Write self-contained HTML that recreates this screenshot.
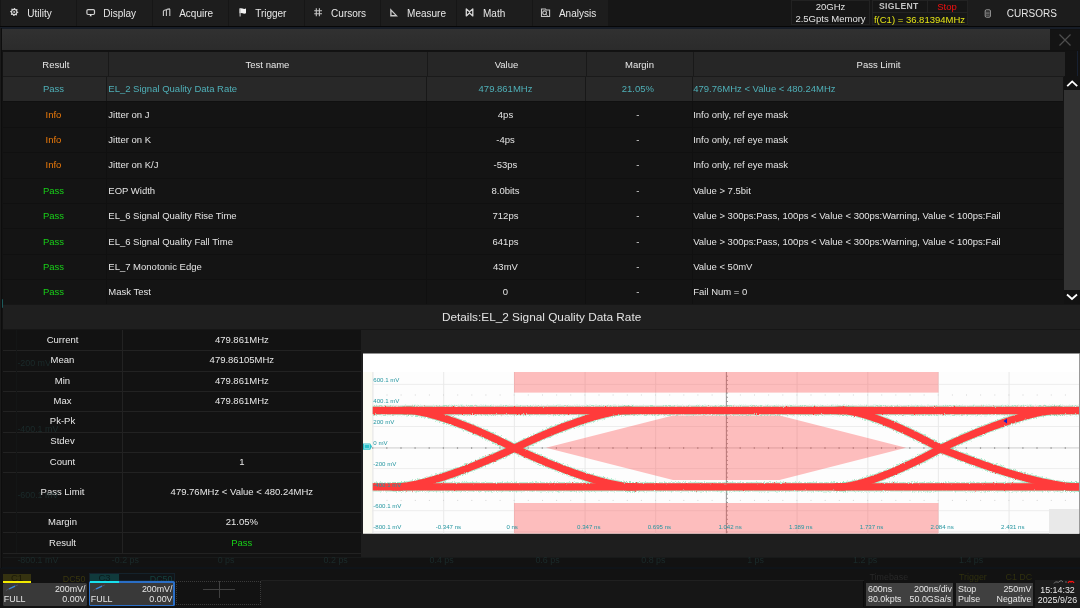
<!DOCTYPE html><html><head><meta charset="utf-8"><style>
html,body{margin:0;padding:0;width:1080px;height:608px;overflow:hidden;background:#121212;}
body{position:relative;font-family:"Liberation Sans",sans-serif;}
.b{position:absolute;}
.t{position:absolute;white-space:nowrap;}
#root{position:absolute;left:0;top:0;width:1080px;height:608px;will-change:transform;}
</style></head><body><div id="root">
<div class="b" style="left:0px;top:0px;width:1080px;height:608px;background:#121212;"></div>
<div class="b" style="left:0px;top:0px;width:1080px;height:26px;background:#161616;"></div>
<div class="b" style="left:1px;top:0px;width:75px;height:26px;background:#1d1d1d;"></div>
<div class="t" style="left:27.30px;top:8.73px;font-size:10px;line-height:10px;color:#e8e8e8;">Utility</div>
<div class="b" style="left:77px;top:0px;width:75px;height:26px;background:#1d1d1d;"></div>
<div class="t" style="left:103.25px;top:8.73px;font-size:10px;line-height:10px;color:#e8e8e8;">Display</div>
<div class="b" style="left:153px;top:0px;width:75px;height:26px;background:#1d1d1d;"></div>
<div class="t" style="left:179.20px;top:8.73px;font-size:10px;line-height:10px;color:#e8e8e8;">Acquire</div>
<div class="b" style="left:229px;top:0px;width:75px;height:26px;background:#1d1d1d;"></div>
<div class="t" style="left:255.15px;top:8.73px;font-size:10px;line-height:10px;color:#e8e8e8;">Trigger</div>
<div class="b" style="left:305px;top:0px;width:75px;height:26px;background:#1d1d1d;"></div>
<div class="t" style="left:331.10px;top:8.73px;font-size:10px;line-height:10px;color:#e8e8e8;">Cursors</div>
<div class="b" style="left:381px;top:0px;width:75px;height:26px;background:#1d1d1d;"></div>
<div class="t" style="left:407.05px;top:8.73px;font-size:10px;line-height:10px;color:#e8e8e8;">Measure</div>
<div class="b" style="left:457px;top:0px;width:75px;height:26px;background:#1d1d1d;"></div>
<div class="t" style="left:483.00px;top:8.73px;font-size:10px;line-height:10px;color:#e8e8e8;">Math</div>
<div class="b" style="left:533px;top:0px;width:75px;height:26px;background:#1d1d1d;"></div>
<div class="t" style="left:558.95px;top:8.73px;font-size:10px;line-height:10px;color:#e8e8e8;">Analysis</div>
<div class="b" style="left:0px;top:26px;width:1080px;height:1px;background:#070707;"></div>
<div class="b" style="left:0px;top:27px;width:1080px;height:1.5px;background:#171d27;"></div>
<svg class="b" style="left:0;top:0" width="1080" height="26" viewBox="0 0 1080 26"><path d="M14.20,7.90 L15.00,7.98 L15.42,9.04 L15.98,9.34 L17.10,9.10 L17.61,9.72 L17.16,10.78 L17.34,11.38 L18.30,12.00 L18.22,12.80 L17.16,13.22 L16.86,13.78 L17.10,14.90 L16.48,15.41 L15.42,14.96 L14.82,15.14 L14.20,16.10 L13.40,16.02 L12.98,14.96 L12.42,14.66 L11.30,14.90 L10.79,14.28 L11.24,13.22 L11.06,12.62 L10.10,12.00 L10.18,11.20 L11.24,10.78 L11.54,10.22 L11.30,9.10 L11.92,8.59 L12.98,9.04 L13.58,8.86Z" fill="#d6d6d6"/><circle cx="14.2" cy="12" r="2.1" fill="#1d1d1d"/><circle cx="14.2" cy="12" r="1.1" fill="#bdbdbd"/><rect x="86.9" y="9.6" width="7.6" height="4.9" rx="1.2" fill="none" stroke="#cfcfcf" stroke-width="1.2"/><path d="M89.6 16.2 L90.7 14 L91.8 16.2 Z" fill="#f0f0f0"/><path d="M163.4 16.1 V11.2 Q163.6 10 166 9.7 M166.4 16.1 V10.2 Q166.6 9 169.5 8.9 Q170 9.2 169.8 10.5 V16.1" fill="none" stroke="#c8c8c8" stroke-width="1.1"/><path d="M239.5 8.5 Q241 7.8 242.6 8.6 Q244.3 9.3 246 8.5 V13.2 Q244.3 14 242.6 13.3 Q241 12.6 239.5 13.2 Z" fill="#f4f4f4"/><path d="M240.1 8.5 V16.6" stroke="#bdbdbd" stroke-width="1.1"/><path d="M316.3 8.2 V16.2 M319.4 8.2 V16.2 M314.2 10.7 H322 M314.2 13.8 H322" fill="none" stroke="#c4c4c4" stroke-width="1.1"/><path d="M390.2 8.2 V16.4 H398 Z M391.6 11.6 V15 H395 Z" fill="#c8c8c8" fill-rule="evenodd"/><path d="M466.3 9 L469.5 11.8 L472.8 9 V15.9 L469.5 13 L466.3 15.9 Z" fill="none" stroke="#d8d8d8" stroke-width="1.3" stroke-linejoin="round"/><path d="M541.5 9 H545.5 L546.3 10 H549.6 V16.5 H541.5 Z" fill="none" stroke="#c4c4c4" stroke-width="1.1"/><circle cx="544.6" cy="12.8" r="1.9" fill="none" stroke="#c4c4c4" stroke-width="1.1"/><path d="M545.5 14 L547.6 15.6" stroke="#c4c4c4" stroke-width="1"/></svg>
<div class="b" style="left:791px;top:0px;width:79px;height:25px;background:#161616;box-shadow:inset 0 0 0 1px #222;"></div>
<div class="t" style="left:530.50px;width:600px;text-align:center;top:1.76px;font-size:9.5px;line-height:9.5px;color:#e4e4e4;">20GHz</div>
<div class="t" style="left:530.50px;width:600px;text-align:center;top:13.76px;font-size:9.5px;line-height:9.5px;color:#e4e4e4;">2.5Gpts Memory</div>
<div class="b" style="left:872px;top:0px;width:96px;height:25px;background:#161616;box-shadow:inset 0 0 0 1px #222;"></div>
<div class="b" style="left:872px;top:12px;width:96px;height:1px;background:#232323;"></div>
<div class="b" style="left:927px;top:0px;width:1px;height:12px;background:#232323;"></div>
<div class="t" style="left:598.80px;width:600px;text-align:center;top:1.92px;font-size:8.6px;line-height:8.6px;color:#c4c4c4;font-weight:bold;letter-spacing:0.35px;">SIGLENT</div>
<div class="t" style="left:647.00px;width:600px;text-align:center;top:1.96px;font-size:9.5px;line-height:9.5px;color:#f01010;">Stop</div>
<div class="t" style="left:619.50px;width:600px;text-align:center;top:14.76px;font-size:9.5px;line-height:9.5px;color:#e4e416;">f(C1) = 36.81394MHz</div>
<div class="b" style="left:968px;top:0px;width:112px;height:26px;background:#1c1c1c;"></div>
<svg class="b" style="left:984px;top:9px;" width="8" height="9" viewBox="0 0 8 9"><rect x="1.2" y="0.8" width="5.2" height="7.4" rx="1.2" fill="none" stroke="#bbb" stroke-width="0.8"/><path d="M2 3.2 H5.6 M2 4.7 H5.6 M2 6.2 H5.6" stroke="#aaa" stroke-width="0.6"/></svg>
<div class="t" style="left:1006.80px;top:8.73px;font-size:10px;line-height:10px;color:#e6e6e6;">CURSORS</div>
<div class="b" style="left:2px;top:28.5px;width:1078px;height:23.0px;background:#111111;"></div>
<div class="b" style="left:2px;top:28.6px;width:1048px;height:21.4px;background:#2e2e2e;background:linear-gradient(#313131,#2b2b2b);"></div>
<div class="b" style="left:1050px;top:30px;width:30px;height:19.5px;background:#141414;"></div>
<svg class="b" style="left:1058px;top:33px;" width="14" height="14" viewBox="0 0 14 14"><path d="M1.5 1.5 L12.5 12.5 M12.5 1.5 L1.5 12.5" stroke="#4e4e4e" stroke-width="1.2"/></svg>
<div class="b" style="left:0px;top:51px;width:1080px;height:254px;background:#121212;"></div>
<div class="b" style="left:3px;top:52px;width:1062px;height:252px;background:#141414;"></div>
<div class="b" style="left:3px;top:52px;width:1062px;height:24px;background:#262626;"></div>
<div class="b" style="left:3px;top:76px;width:1062px;height:1px;background:#1a1a1a;"></div>
<div class="b" style="left:108px;top:52px;width:1px;height:24px;background:#191919;"></div>
<div class="b" style="left:427px;top:52px;width:1px;height:24px;background:#191919;"></div>
<div class="b" style="left:586px;top:52px;width:1px;height:24px;background:#191919;"></div>
<div class="b" style="left:693px;top:52px;width:1px;height:24px;background:#191919;"></div>
<div class="t" style="left:-244.20px;width:600px;text-align:center;top:59.96px;font-size:9.5px;line-height:9.5px;color:#e8e8e8;">Result</div>
<div class="t" style="left:-32.50px;width:600px;text-align:center;top:59.96px;font-size:9.5px;line-height:9.5px;color:#e8e8e8;">Test name</div>
<div class="t" style="left:206.50px;width:600px;text-align:center;top:59.96px;font-size:9.5px;line-height:9.5px;color:#e8e8e8;">Value</div>
<div class="t" style="left:339.50px;width:600px;text-align:center;top:59.96px;font-size:9.5px;line-height:9.5px;color:#e8e8e8;">Margin</div>
<div class="t" style="left:578.50px;width:600px;text-align:center;top:59.96px;font-size:9.5px;line-height:9.5px;color:#e8e8e8;">Pass Limit</div>
<div class="b" style="left:3px;top:77px;width:1060px;height:24px;background:#282828;"></div>
<div class="b" style="left:106px;top:77px;width:1px;height:24px;background:#181818;"></div>
<div class="b" style="left:426px;top:77px;width:1px;height:24px;background:#181818;"></div>
<div class="b" style="left:585px;top:77px;width:1px;height:24px;background:#181818;"></div>
<div class="b" style="left:692px;top:77px;width:1px;height:24px;background:#181818;"></div>
<div class="t" style="left:-246.50px;width:600px;text-align:center;top:84.26px;font-size:9.5px;line-height:9.5px;color:#4fb0b8;">Pass</div>
<div class="t" style="left:108.30px;top:84.26px;font-size:9.5px;line-height:9.5px;color:#4fb0b8;">EL_2 Signal Quality Data Rate</div>
<div class="t" style="left:205.50px;width:600px;text-align:center;top:84.26px;font-size:9.5px;line-height:9.5px;color:#4fb0b8;">479.861MHz</div>
<div class="t" style="left:337.80px;width:600px;text-align:center;top:84.26px;font-size:9.5px;line-height:9.5px;color:#4fb0b8;">21.05%</div>
<div class="t" style="left:693.20px;top:84.26px;font-size:9.5px;line-height:9.5px;color:#4fb0b8;">479.76MHz &lt; Value &lt; 480.24MHz</div>
<div class="b" style="left:3px;top:101px;width:1060px;height:1px;background:#101010;"></div>
<div class="b" style="left:106px;top:101px;width:1px;height:26px;background:#101010;"></div>
<div class="b" style="left:426px;top:101px;width:1px;height:26px;background:#101010;"></div>
<div class="b" style="left:585px;top:101px;width:1px;height:26px;background:#101010;"></div>
<div class="b" style="left:692px;top:101px;width:1px;height:26px;background:#101010;"></div>
<div class="t" style="left:-246.50px;width:600px;text-align:center;top:109.66px;font-size:9.5px;line-height:9.5px;color:#ec7a0a;">Info</div>
<div class="t" style="left:108.30px;top:109.66px;font-size:9.5px;line-height:9.5px;color:#e4e4e4;">Jitter on J</div>
<div class="t" style="left:205.50px;width:600px;text-align:center;top:109.66px;font-size:9.5px;line-height:9.5px;color:#e4e4e4;">4ps</div>
<div class="t" style="left:337.80px;width:600px;text-align:center;top:109.66px;font-size:9.5px;line-height:9.5px;color:#e4e4e4;">-</div>
<div class="t" style="left:693.20px;top:109.66px;font-size:9.5px;line-height:9.5px;color:#e4e4e4;">Info only, ref eye mask</div>
<div class="b" style="left:3px;top:127px;width:1060px;height:1px;background:#101010;"></div>
<div class="b" style="left:106px;top:127px;width:1px;height:25px;background:#101010;"></div>
<div class="b" style="left:426px;top:127px;width:1px;height:25px;background:#101010;"></div>
<div class="b" style="left:585px;top:127px;width:1px;height:25px;background:#101010;"></div>
<div class="b" style="left:692px;top:127px;width:1px;height:25px;background:#101010;"></div>
<div class="t" style="left:-246.50px;width:600px;text-align:center;top:135.06px;font-size:9.5px;line-height:9.5px;color:#ec7a0a;">Info</div>
<div class="t" style="left:108.30px;top:135.06px;font-size:9.5px;line-height:9.5px;color:#e4e4e4;">Jitter on K</div>
<div class="t" style="left:205.50px;width:600px;text-align:center;top:135.06px;font-size:9.5px;line-height:9.5px;color:#e4e4e4;">-4ps</div>
<div class="t" style="left:337.80px;width:600px;text-align:center;top:135.06px;font-size:9.5px;line-height:9.5px;color:#e4e4e4;">-</div>
<div class="t" style="left:693.20px;top:135.06px;font-size:9.5px;line-height:9.5px;color:#e4e4e4;">Info only, ref eye mask</div>
<div class="b" style="left:3px;top:152px;width:1060px;height:1px;background:#101010;"></div>
<div class="b" style="left:106px;top:152px;width:1px;height:26px;background:#101010;"></div>
<div class="b" style="left:426px;top:152px;width:1px;height:26px;background:#101010;"></div>
<div class="b" style="left:585px;top:152px;width:1px;height:26px;background:#101010;"></div>
<div class="b" style="left:692px;top:152px;width:1px;height:26px;background:#101010;"></div>
<div class="t" style="left:-246.50px;width:600px;text-align:center;top:160.46px;font-size:9.5px;line-height:9.5px;color:#ec7a0a;">Info</div>
<div class="t" style="left:108.30px;top:160.46px;font-size:9.5px;line-height:9.5px;color:#e4e4e4;">Jitter on K/J</div>
<div class="t" style="left:205.50px;width:600px;text-align:center;top:160.46px;font-size:9.5px;line-height:9.5px;color:#e4e4e4;">-53ps</div>
<div class="t" style="left:337.80px;width:600px;text-align:center;top:160.46px;font-size:9.5px;line-height:9.5px;color:#e4e4e4;">-</div>
<div class="t" style="left:693.20px;top:160.46px;font-size:9.5px;line-height:9.5px;color:#e4e4e4;">Info only, ref eye mask</div>
<div class="b" style="left:3px;top:178px;width:1060px;height:1px;background:#101010;"></div>
<div class="b" style="left:106px;top:178px;width:1px;height:25px;background:#101010;"></div>
<div class="b" style="left:426px;top:178px;width:1px;height:25px;background:#101010;"></div>
<div class="b" style="left:585px;top:178px;width:1px;height:25px;background:#101010;"></div>
<div class="b" style="left:692px;top:178px;width:1px;height:25px;background:#101010;"></div>
<div class="t" style="left:-246.50px;width:600px;text-align:center;top:185.86px;font-size:9.5px;line-height:9.5px;color:#18d018;">Pass</div>
<div class="t" style="left:108.30px;top:185.86px;font-size:9.5px;line-height:9.5px;color:#e4e4e4;">EOP Width</div>
<div class="t" style="left:205.50px;width:600px;text-align:center;top:185.86px;font-size:9.5px;line-height:9.5px;color:#e4e4e4;">8.0bits</div>
<div class="t" style="left:337.80px;width:600px;text-align:center;top:185.86px;font-size:9.5px;line-height:9.5px;color:#e4e4e4;">-</div>
<div class="t" style="left:693.20px;top:185.86px;font-size:9.5px;line-height:9.5px;color:#e4e4e4;">Value &gt; 7.5bit</div>
<div class="b" style="left:3px;top:203px;width:1060px;height:1px;background:#101010;"></div>
<div class="b" style="left:106px;top:203px;width:1px;height:25px;background:#101010;"></div>
<div class="b" style="left:426px;top:203px;width:1px;height:25px;background:#101010;"></div>
<div class="b" style="left:585px;top:203px;width:1px;height:25px;background:#101010;"></div>
<div class="b" style="left:692px;top:203px;width:1px;height:25px;background:#101010;"></div>
<div class="t" style="left:-246.50px;width:600px;text-align:center;top:211.26px;font-size:9.5px;line-height:9.5px;color:#18d018;">Pass</div>
<div class="t" style="left:108.30px;top:211.26px;font-size:9.5px;line-height:9.5px;color:#e4e4e4;">EL_6 Signal Quality Rise Time</div>
<div class="t" style="left:205.50px;width:600px;text-align:center;top:211.26px;font-size:9.5px;line-height:9.5px;color:#e4e4e4;">712ps</div>
<div class="t" style="left:337.80px;width:600px;text-align:center;top:211.26px;font-size:9.5px;line-height:9.5px;color:#e4e4e4;">-</div>
<div class="t" style="left:693.20px;top:211.26px;font-size:9.5px;line-height:9.5px;color:#e4e4e4;">Value &gt; 300ps:Pass, 100ps &lt; Value &lt; 300ps:Warning, Value &lt; 100ps:Fail</div>
<div class="b" style="left:3px;top:228px;width:1060px;height:1px;background:#101010;"></div>
<div class="b" style="left:106px;top:228px;width:1px;height:26px;background:#101010;"></div>
<div class="b" style="left:426px;top:228px;width:1px;height:26px;background:#101010;"></div>
<div class="b" style="left:585px;top:228px;width:1px;height:26px;background:#101010;"></div>
<div class="b" style="left:692px;top:228px;width:1px;height:26px;background:#101010;"></div>
<div class="t" style="left:-246.50px;width:600px;text-align:center;top:236.66px;font-size:9.5px;line-height:9.5px;color:#18d018;">Pass</div>
<div class="t" style="left:108.30px;top:236.66px;font-size:9.5px;line-height:9.5px;color:#e4e4e4;">EL_6 Signal Quality Fall Time</div>
<div class="t" style="left:205.50px;width:600px;text-align:center;top:236.66px;font-size:9.5px;line-height:9.5px;color:#e4e4e4;">641ps</div>
<div class="t" style="left:337.80px;width:600px;text-align:center;top:236.66px;font-size:9.5px;line-height:9.5px;color:#e4e4e4;">-</div>
<div class="t" style="left:693.20px;top:236.66px;font-size:9.5px;line-height:9.5px;color:#e4e4e4;">Value &gt; 300ps:Pass, 100ps &lt; Value &lt; 300ps:Warning, Value &lt; 100ps:Fail</div>
<div class="b" style="left:3px;top:254px;width:1060px;height:1px;background:#101010;"></div>
<div class="b" style="left:106px;top:254px;width:1px;height:25px;background:#101010;"></div>
<div class="b" style="left:426px;top:254px;width:1px;height:25px;background:#101010;"></div>
<div class="b" style="left:585px;top:254px;width:1px;height:25px;background:#101010;"></div>
<div class="b" style="left:692px;top:254px;width:1px;height:25px;background:#101010;"></div>
<div class="t" style="left:-246.50px;width:600px;text-align:center;top:262.06px;font-size:9.5px;line-height:9.5px;color:#18d018;">Pass</div>
<div class="t" style="left:108.30px;top:262.06px;font-size:9.5px;line-height:9.5px;color:#e4e4e4;">EL_7 Monotonic Edge</div>
<div class="t" style="left:205.50px;width:600px;text-align:center;top:262.06px;font-size:9.5px;line-height:9.5px;color:#e4e4e4;">43mV</div>
<div class="t" style="left:337.80px;width:600px;text-align:center;top:262.06px;font-size:9.5px;line-height:9.5px;color:#e4e4e4;">-</div>
<div class="t" style="left:693.20px;top:262.06px;font-size:9.5px;line-height:9.5px;color:#e4e4e4;">Value &lt; 50mV</div>
<div class="b" style="left:3px;top:279px;width:1060px;height:1px;background:#101010;"></div>
<div class="b" style="left:106px;top:279px;width:1px;height:26px;background:#101010;"></div>
<div class="b" style="left:426px;top:279px;width:1px;height:26px;background:#101010;"></div>
<div class="b" style="left:585px;top:279px;width:1px;height:26px;background:#101010;"></div>
<div class="b" style="left:692px;top:279px;width:1px;height:26px;background:#101010;"></div>
<div class="t" style="left:-246.50px;width:600px;text-align:center;top:287.46px;font-size:9.5px;line-height:9.5px;color:#18d018;">Pass</div>
<div class="t" style="left:108.30px;top:287.46px;font-size:9.5px;line-height:9.5px;color:#e4e4e4;">Mask Test</div>
<div class="t" style="left:205.50px;width:600px;text-align:center;top:287.46px;font-size:9.5px;line-height:9.5px;color:#e4e4e4;">0</div>
<div class="t" style="left:337.80px;width:600px;text-align:center;top:287.46px;font-size:9.5px;line-height:9.5px;color:#e4e4e4;">-</div>
<div class="t" style="left:693.20px;top:287.46px;font-size:9.5px;line-height:9.5px;color:#e4e4e4;">Fail Num = 0</div>
<div class="b" style="left:1064px;top:76px;width:16px;height:228px;background:#121212;"></div>
<div class="b" style="left:1064px;top:90px;width:16px;height:200px;background:#333333;"></div>
<svg class="b" style="left:1064px;top:76px;" width="16" height="14" viewBox="0 0 16 14"><path d="M3.2 10.2 L8.2 5.4 L13.2 10.2" fill="none" stroke="#fff" stroke-width="1.8"/></svg>
<svg class="b" style="left:1064px;top:290px;" width="16" height="14" viewBox="0 0 16 14"><path d="M3 4.5 L8 9 L13 4.5" fill="none" stroke="#fff" stroke-width="1.8"/></svg>
<div class="b" style="left:0px;top:304px;width:1080px;height:1px;background:#161616;"></div>
<div class="b" style="left:3px;top:305px;width:1077px;height:24px;background:#1f1f1f;"></div>
<div class="b" style="left:3px;top:329px;width:1077px;height:1px;background:#161616;"></div>
<div class="t" style="left:241.60px;width:600px;text-align:center;top:311.91px;font-size:11.8px;line-height:11.8px;color:#e4e4e4;">Details:EL_2 Signal Quality Data Rate</div>
<div class="b" style="left:361px;top:330px;width:719px;height:227px;background:#1e1e1e;"></div>
<div class="b" style="left:3px;top:330px;width:358px;height:223px;background:#121212;"></div>
<div class="t" style="left:-237.50px;width:600px;text-align:center;top:334.91px;font-size:9.5px;line-height:9.5px;color:#e8e8e8;">Current</div>
<div class="t" style="left:-58.20px;width:600px;text-align:center;top:334.91px;font-size:9.5px;line-height:9.5px;color:#e8e8e8;">479.861MHz</div>
<div class="b" style="left:3px;top:350px;width:358px;height:1px;background:#222222;"></div>
<div class="t" style="left:-237.50px;width:600px;text-align:center;top:355.41px;font-size:9.5px;line-height:9.5px;color:#e8e8e8;">Mean</div>
<div class="t" style="left:-58.20px;width:600px;text-align:center;top:355.41px;font-size:9.5px;line-height:9.5px;color:#e8e8e8;">479.86105MHz</div>
<div class="b" style="left:3px;top:371px;width:358px;height:1px;background:#222222;"></div>
<div class="t" style="left:-237.50px;width:600px;text-align:center;top:375.66px;font-size:9.5px;line-height:9.5px;color:#e8e8e8;">Min</div>
<div class="t" style="left:-58.20px;width:600px;text-align:center;top:375.66px;font-size:9.5px;line-height:9.5px;color:#e8e8e8;">479.861MHz</div>
<div class="b" style="left:3px;top:391px;width:358px;height:1px;background:#222222;"></div>
<div class="t" style="left:-237.50px;width:600px;text-align:center;top:395.76px;font-size:9.5px;line-height:9.5px;color:#e8e8e8;">Max</div>
<div class="t" style="left:-58.20px;width:600px;text-align:center;top:395.76px;font-size:9.5px;line-height:9.5px;color:#e8e8e8;">479.861MHz</div>
<div class="b" style="left:3px;top:411px;width:358px;height:1px;background:#222222;"></div>
<div class="t" style="left:-237.50px;width:600px;text-align:center;top:416.06px;font-size:9.5px;line-height:9.5px;color:#e8e8e8;">Pk-Pk</div>
<div class="t" style="left:-58.20px;width:600px;text-align:center;top:416.06px;font-size:9.5px;line-height:9.5px;color:#e8e8e8;"></div>
<div class="b" style="left:3px;top:432px;width:358px;height:1px;background:#222222;"></div>
<div class="t" style="left:-237.50px;width:600px;text-align:center;top:436.26px;font-size:9.5px;line-height:9.5px;color:#e8e8e8;">Stdev</div>
<div class="t" style="left:-58.20px;width:600px;text-align:center;top:436.26px;font-size:9.5px;line-height:9.5px;color:#e8e8e8;"></div>
<div class="b" style="left:3px;top:452px;width:358px;height:1px;background:#222222;"></div>
<div class="t" style="left:-237.50px;width:600px;text-align:center;top:456.56px;font-size:9.5px;line-height:9.5px;color:#e8e8e8;">Count</div>
<div class="t" style="left:-58.20px;width:600px;text-align:center;top:456.56px;font-size:9.5px;line-height:9.5px;color:#e8e8e8;">1</div>
<div class="b" style="left:3px;top:472px;width:358px;height:1px;background:#222222;"></div>
<div class="t" style="left:-237.50px;width:600px;text-align:center;top:486.96px;font-size:9.5px;line-height:9.5px;color:#e8e8e8;">Pass Limit</div>
<div class="t" style="left:-58.20px;width:600px;text-align:center;top:486.96px;font-size:9.5px;line-height:9.5px;color:#e8e8e8;">479.76MHz &lt; Value &lt; 480.24MHz</div>
<div class="b" style="left:3px;top:512px;width:358px;height:1px;background:#222222;"></div>
<div class="t" style="left:-237.50px;width:600px;text-align:center;top:516.96px;font-size:9.5px;line-height:9.5px;color:#e8e8e8;">Margin</div>
<div class="t" style="left:-58.20px;width:600px;text-align:center;top:516.96px;font-size:9.5px;line-height:9.5px;color:#e8e8e8;">21.05%</div>
<div class="b" style="left:3px;top:532px;width:358px;height:1px;background:#222222;"></div>
<div class="t" style="left:-237.50px;width:600px;text-align:center;top:538.06px;font-size:9.5px;line-height:9.5px;color:#e8e8e8;">Result</div>
<div class="t" style="left:-58.20px;width:600px;text-align:center;top:538.06px;font-size:9.5px;line-height:9.5px;color:#e8e8e8;"><span style="color:#18d018">Pass</span></div>
<div class="b" style="left:122px;top:330px;width:1px;height:223px;background:#222222;"></div>
<div class="b" style="left:3px;top:553px;width:358px;height:1px;background:#222222;"></div>
<div class="t" style="left:17.40px;top:359.07px;font-size:8.9px;line-height:8.9px;color:#1b2b2b;">-200 mV</div>
<div class="t" style="left:17.40px;top:424.77px;font-size:8.9px;line-height:8.9px;color:#1b2b2b;">-400.1 mV</div>
<div class="t" style="left:17.40px;top:490.57px;font-size:8.9px;line-height:8.9px;color:#1b2b2b;">-600.1 mV</div>
<div class="b" style="left:16px;top:330px;width:1px;height:223px;background:#141616;"></div>
<svg class="b" style="left:0;top:0" width="1080" height="608" viewBox="0 0 1080 608"><defs><clipPath id="pc"><rect x="372.7" y="372" width="706.3" height="161.5"/></clipPath><filter id="nz" x="0" y="0" width="1080" height="608" filterUnits="userSpaceOnUse"><feTurbulence type="fractalNoise" baseFrequency="0.9" numOctaves="2" seed="7" result="t"/><feDisplacementMap in="SourceGraphic" in2="t" scale="4" xChannelSelector="R" yChannelSelector="G"/></filter><filter id="nz2" x="0" y="0" width="1080" height="608" filterUnits="userSpaceOnUse"><feTurbulence type="fractalNoise" baseFrequency="0.9" numOctaves="1" seed="11" result="t"/><feDisplacementMap in="SourceGraphic" in2="t" scale="2.2" xChannelSelector="R" yChannelSelector="G"/></filter></defs><rect x="363" y="353.5" width="716.5" height="180" fill="#ffffff"/><rect x="363" y="372" width="9.7" height="161.5" fill="#fcfbf3"/><rect x="372.7" y="372" width="706.3" height="161.5" fill="#fdfdfd"/><line x1="443.7" y1="372" x2="443.7" y2="533.5" stroke="#e4e4e4" stroke-width="0.8"/><line x1="514.4" y1="372" x2="514.4" y2="533.5" stroke="#e4e4e4" stroke-width="0.8"/><line x1="585.1" y1="372" x2="585.1" y2="533.5" stroke="#e4e4e4" stroke-width="0.8"/><line x1="655.7" y1="372" x2="655.7" y2="533.5" stroke="#e4e4e4" stroke-width="0.8"/><line x1="726.4" y1="372" x2="726.4" y2="533.5" stroke="#e4e4e4" stroke-width="0.8"/><line x1="797.1" y1="372" x2="797.1" y2="533.5" stroke="#e4e4e4" stroke-width="0.8"/><line x1="867.8" y1="372" x2="867.8" y2="533.5" stroke="#e4e4e4" stroke-width="0.8"/><line x1="938.4" y1="372" x2="938.4" y2="533.5" stroke="#e4e4e4" stroke-width="0.8"/><line x1="1009.1" y1="372" x2="1009.1" y2="533.5" stroke="#e4e4e4" stroke-width="0.8"/><line x1="372.9" y1="372" x2="372.9" y2="533.5" stroke="#dcdcdc" stroke-width="0.8"/><line x1="372.7" y1="384.4" x2="1079" y2="384.4" stroke="#e8e8e8" stroke-width="0.8"/><line x1="372.7" y1="405.4" x2="1079" y2="405.4" stroke="#e8e8e8" stroke-width="0.8"/><line x1="372.7" y1="426.5" x2="1079" y2="426.5" stroke="#e8e8e8" stroke-width="0.8"/><line x1="372.7" y1="447.5" x2="1079" y2="447.5" stroke="#e8e8e8" stroke-width="0.8"/><line x1="372.7" y1="468.6" x2="1079" y2="468.6" stroke="#e8e8e8" stroke-width="0.8"/><line x1="372.7" y1="489.6" x2="1079" y2="489.6" stroke="#e8e8e8" stroke-width="0.8"/><line x1="372.7" y1="510.7" x2="1079" y2="510.7" stroke="#e8e8e8" stroke-width="0.8"/><line x1="372.7" y1="531.8" x2="1079" y2="531.8" stroke="#e8e8e8" stroke-width="0.8"/><line x1="372.7" y1="448" x2="1079" y2="448" stroke="#d4d4d4" stroke-width="1"/><line x1="726.4" y1="372" x2="726.4" y2="533.5" stroke="#8c8c8c" stroke-width="0.9"/><rect x="372.1" y="447" width="1.2" height="2" fill="#a8a8a8"/><rect x="386.2" y="447" width="1.2" height="2" fill="#a8a8a8"/><rect x="400.4" y="447" width="1.2" height="2" fill="#a8a8a8"/><rect x="414.5" y="447" width="1.2" height="2" fill="#a8a8a8"/><rect x="428.6" y="447" width="1.2" height="2" fill="#a8a8a8"/><rect x="442.8" y="447" width="1.2" height="2" fill="#a8a8a8"/><rect x="456.9" y="447" width="1.2" height="2" fill="#a8a8a8"/><rect x="471.0" y="447" width="1.2" height="2" fill="#a8a8a8"/><rect x="485.2" y="447" width="1.2" height="2" fill="#a8a8a8"/><rect x="499.3" y="447" width="1.2" height="2" fill="#a8a8a8"/><rect x="513.4" y="447" width="1.2" height="2" fill="#a8a8a8"/><rect x="527.6" y="447" width="1.2" height="2" fill="#a8a8a8"/><rect x="541.7" y="447" width="1.2" height="2" fill="#a8a8a8"/><rect x="555.8" y="447" width="1.2" height="2" fill="#a8a8a8"/><rect x="570.0" y="447" width="1.2" height="2" fill="#a8a8a8"/><rect x="584.1" y="447" width="1.2" height="2" fill="#a8a8a8"/><rect x="598.2" y="447" width="1.2" height="2" fill="#a8a8a8"/><rect x="612.4" y="447" width="1.2" height="2" fill="#a8a8a8"/><rect x="626.5" y="447" width="1.2" height="2" fill="#a8a8a8"/><rect x="640.6" y="447" width="1.2" height="2" fill="#a8a8a8"/><rect x="654.8" y="447" width="1.2" height="2" fill="#a8a8a8"/><rect x="668.9" y="447" width="1.2" height="2" fill="#a8a8a8"/><rect x="683.0" y="447" width="1.2" height="2" fill="#a8a8a8"/><rect x="697.2" y="447" width="1.2" height="2" fill="#a8a8a8"/><rect x="711.3" y="447" width="1.2" height="2" fill="#a8a8a8"/><rect x="725.5" y="447" width="1.2" height="2" fill="#a8a8a8"/><rect x="739.6" y="447" width="1.2" height="2" fill="#a8a8a8"/><rect x="753.7" y="447" width="1.2" height="2" fill="#a8a8a8"/><rect x="767.9" y="447" width="1.2" height="2" fill="#a8a8a8"/><rect x="782.0" y="447" width="1.2" height="2" fill="#a8a8a8"/><rect x="796.1" y="447" width="1.2" height="2" fill="#a8a8a8"/><rect x="810.3" y="447" width="1.2" height="2" fill="#a8a8a8"/><rect x="824.4" y="447" width="1.2" height="2" fill="#a8a8a8"/><rect x="838.5" y="447" width="1.2" height="2" fill="#a8a8a8"/><rect x="852.7" y="447" width="1.2" height="2" fill="#a8a8a8"/><rect x="866.8" y="447" width="1.2" height="2" fill="#a8a8a8"/><rect x="880.9" y="447" width="1.2" height="2" fill="#a8a8a8"/><rect x="895.1" y="447" width="1.2" height="2" fill="#a8a8a8"/><rect x="909.2" y="447" width="1.2" height="2" fill="#a8a8a8"/><rect x="923.3" y="447" width="1.2" height="2" fill="#a8a8a8"/><rect x="937.5" y="447" width="1.2" height="2" fill="#a8a8a8"/><rect x="951.6" y="447" width="1.2" height="2" fill="#a8a8a8"/><rect x="965.7" y="447" width="1.2" height="2" fill="#a8a8a8"/><rect x="979.9" y="447" width="1.2" height="2" fill="#a8a8a8"/><rect x="994.0" y="447" width="1.2" height="2" fill="#a8a8a8"/><rect x="1008.1" y="447" width="1.2" height="2" fill="#a8a8a8"/><rect x="1022.3" y="447" width="1.2" height="2" fill="#a8a8a8"/><rect x="1036.4" y="447" width="1.2" height="2" fill="#a8a8a8"/><rect x="1050.5" y="447" width="1.2" height="2" fill="#a8a8a8"/><rect x="1064.7" y="447" width="1.2" height="2" fill="#a8a8a8"/><rect x="386.5" y="394.5" width="1" height="1" fill="#d4d4d4"/><rect x="400.6" y="394.5" width="1" height="1" fill="#d4d4d4"/><rect x="414.8" y="394.5" width="1" height="1" fill="#d4d4d4"/><rect x="428.9" y="394.5" width="1" height="1" fill="#d4d4d4"/><rect x="443.0" y="394.5" width="1" height="1" fill="#d4d4d4"/><rect x="457.2" y="394.5" width="1" height="1" fill="#d4d4d4"/><rect x="471.3" y="394.5" width="1" height="1" fill="#d4d4d4"/><rect x="485.4" y="394.5" width="1" height="1" fill="#d4d4d4"/><rect x="499.6" y="394.5" width="1" height="1" fill="#d4d4d4"/><rect x="513.7" y="394.5" width="1" height="1" fill="#d4d4d4"/><rect x="527.8" y="394.5" width="1" height="1" fill="#d4d4d4"/><rect x="542.0" y="394.5" width="1" height="1" fill="#d4d4d4"/><rect x="556.1" y="394.5" width="1" height="1" fill="#d4d4d4"/><rect x="570.2" y="394.5" width="1" height="1" fill="#d4d4d4"/><rect x="584.4" y="394.5" width="1" height="1" fill="#d4d4d4"/><rect x="598.5" y="394.5" width="1" height="1" fill="#d4d4d4"/><rect x="612.6" y="394.5" width="1" height="1" fill="#d4d4d4"/><rect x="626.8" y="394.5" width="1" height="1" fill="#d4d4d4"/><rect x="640.9" y="394.5" width="1" height="1" fill="#d4d4d4"/><rect x="655.0" y="394.5" width="1" height="1" fill="#d4d4d4"/><rect x="669.2" y="394.5" width="1" height="1" fill="#d4d4d4"/><rect x="683.3" y="394.5" width="1" height="1" fill="#d4d4d4"/><rect x="697.4" y="394.5" width="1" height="1" fill="#d4d4d4"/><rect x="711.6" y="394.5" width="1" height="1" fill="#d4d4d4"/><rect x="725.7" y="394.5" width="1" height="1" fill="#d4d4d4"/><rect x="739.9" y="394.5" width="1" height="1" fill="#d4d4d4"/><rect x="754.0" y="394.5" width="1" height="1" fill="#d4d4d4"/><rect x="768.1" y="394.5" width="1" height="1" fill="#d4d4d4"/><rect x="782.3" y="394.5" width="1" height="1" fill="#d4d4d4"/><rect x="796.4" y="394.5" width="1" height="1" fill="#d4d4d4"/><rect x="810.5" y="394.5" width="1" height="1" fill="#d4d4d4"/><rect x="824.7" y="394.5" width="1" height="1" fill="#d4d4d4"/><rect x="838.8" y="394.5" width="1" height="1" fill="#d4d4d4"/><rect x="852.9" y="394.5" width="1" height="1" fill="#d4d4d4"/><rect x="867.1" y="394.5" width="1" height="1" fill="#d4d4d4"/><rect x="881.2" y="394.5" width="1" height="1" fill="#d4d4d4"/><rect x="895.3" y="394.5" width="1" height="1" fill="#d4d4d4"/><rect x="909.5" y="394.5" width="1" height="1" fill="#d4d4d4"/><rect x="923.6" y="394.5" width="1" height="1" fill="#d4d4d4"/><rect x="937.7" y="394.5" width="1" height="1" fill="#d4d4d4"/><rect x="951.9" y="394.5" width="1" height="1" fill="#d4d4d4"/><rect x="966.0" y="394.5" width="1" height="1" fill="#d4d4d4"/><rect x="980.1" y="394.5" width="1" height="1" fill="#d4d4d4"/><rect x="994.3" y="394.5" width="1" height="1" fill="#d4d4d4"/><rect x="1008.4" y="394.5" width="1" height="1" fill="#d4d4d4"/><rect x="1022.5" y="394.5" width="1" height="1" fill="#d4d4d4"/><rect x="1036.7" y="394.5" width="1" height="1" fill="#d4d4d4"/><rect x="1050.8" y="394.5" width="1" height="1" fill="#d4d4d4"/><rect x="1064.9" y="394.5" width="1" height="1" fill="#d4d4d4"/><rect x="386.5" y="499.9" width="1" height="1" fill="#d4d4d4"/><rect x="400.6" y="499.9" width="1" height="1" fill="#d4d4d4"/><rect x="414.8" y="499.9" width="1" height="1" fill="#d4d4d4"/><rect x="428.9" y="499.9" width="1" height="1" fill="#d4d4d4"/><rect x="443.0" y="499.9" width="1" height="1" fill="#d4d4d4"/><rect x="457.2" y="499.9" width="1" height="1" fill="#d4d4d4"/><rect x="471.3" y="499.9" width="1" height="1" fill="#d4d4d4"/><rect x="485.4" y="499.9" width="1" height="1" fill="#d4d4d4"/><rect x="499.6" y="499.9" width="1" height="1" fill="#d4d4d4"/><rect x="513.7" y="499.9" width="1" height="1" fill="#d4d4d4"/><rect x="527.8" y="499.9" width="1" height="1" fill="#d4d4d4"/><rect x="542.0" y="499.9" width="1" height="1" fill="#d4d4d4"/><rect x="556.1" y="499.9" width="1" height="1" fill="#d4d4d4"/><rect x="570.2" y="499.9" width="1" height="1" fill="#d4d4d4"/><rect x="584.4" y="499.9" width="1" height="1" fill="#d4d4d4"/><rect x="598.5" y="499.9" width="1" height="1" fill="#d4d4d4"/><rect x="612.6" y="499.9" width="1" height="1" fill="#d4d4d4"/><rect x="626.8" y="499.9" width="1" height="1" fill="#d4d4d4"/><rect x="640.9" y="499.9" width="1" height="1" fill="#d4d4d4"/><rect x="655.0" y="499.9" width="1" height="1" fill="#d4d4d4"/><rect x="669.2" y="499.9" width="1" height="1" fill="#d4d4d4"/><rect x="683.3" y="499.9" width="1" height="1" fill="#d4d4d4"/><rect x="697.4" y="499.9" width="1" height="1" fill="#d4d4d4"/><rect x="711.6" y="499.9" width="1" height="1" fill="#d4d4d4"/><rect x="725.7" y="499.9" width="1" height="1" fill="#d4d4d4"/><rect x="739.9" y="499.9" width="1" height="1" fill="#d4d4d4"/><rect x="754.0" y="499.9" width="1" height="1" fill="#d4d4d4"/><rect x="768.1" y="499.9" width="1" height="1" fill="#d4d4d4"/><rect x="782.3" y="499.9" width="1" height="1" fill="#d4d4d4"/><rect x="796.4" y="499.9" width="1" height="1" fill="#d4d4d4"/><rect x="810.5" y="499.9" width="1" height="1" fill="#d4d4d4"/><rect x="824.7" y="499.9" width="1" height="1" fill="#d4d4d4"/><rect x="838.8" y="499.9" width="1" height="1" fill="#d4d4d4"/><rect x="852.9" y="499.9" width="1" height="1" fill="#d4d4d4"/><rect x="867.1" y="499.9" width="1" height="1" fill="#d4d4d4"/><rect x="881.2" y="499.9" width="1" height="1" fill="#d4d4d4"/><rect x="895.3" y="499.9" width="1" height="1" fill="#d4d4d4"/><rect x="909.5" y="499.9" width="1" height="1" fill="#d4d4d4"/><rect x="923.6" y="499.9" width="1" height="1" fill="#d4d4d4"/><rect x="937.7" y="499.9" width="1" height="1" fill="#d4d4d4"/><rect x="951.9" y="499.9" width="1" height="1" fill="#d4d4d4"/><rect x="966.0" y="499.9" width="1" height="1" fill="#d4d4d4"/><rect x="980.1" y="499.9" width="1" height="1" fill="#d4d4d4"/><rect x="994.3" y="499.9" width="1" height="1" fill="#d4d4d4"/><rect x="1008.4" y="499.9" width="1" height="1" fill="#d4d4d4"/><rect x="1022.5" y="499.9" width="1" height="1" fill="#d4d4d4"/><rect x="1036.7" y="499.9" width="1" height="1" fill="#d4d4d4"/><rect x="1050.8" y="499.9" width="1" height="1" fill="#d4d4d4"/><rect x="1064.9" y="499.9" width="1" height="1" fill="#d4d4d4"/><rect x="726.6" y="375.7" width="1.2" height="1" fill="#8a8a8a"/><rect x="726.6" y="379.9" width="1.2" height="1" fill="#8a8a8a"/><rect x="726.6" y="384.1" width="1.2" height="1" fill="#8a8a8a"/><rect x="726.6" y="388.3" width="1.2" height="1" fill="#8a8a8a"/><rect x="726.6" y="392.5" width="1.2" height="1" fill="#8a8a8a"/><rect x="726.6" y="396.8" width="1.2" height="1" fill="#8a8a8a"/><rect x="726.6" y="401.0" width="1.2" height="1" fill="#8a8a8a"/><rect x="726.6" y="405.2" width="1.2" height="1" fill="#8a8a8a"/><rect x="726.6" y="409.4" width="1.2" height="1" fill="#8a8a8a"/><rect x="726.6" y="413.6" width="1.2" height="1" fill="#8a8a8a"/><rect x="726.6" y="417.8" width="1.2" height="1" fill="#8a8a8a"/><rect x="726.6" y="422.0" width="1.2" height="1" fill="#8a8a8a"/><rect x="726.6" y="426.2" width="1.2" height="1" fill="#8a8a8a"/><rect x="726.6" y="430.4" width="1.2" height="1" fill="#8a8a8a"/><rect x="726.6" y="434.6" width="1.2" height="1" fill="#8a8a8a"/><rect x="726.6" y="438.9" width="1.2" height="1" fill="#8a8a8a"/><rect x="726.6" y="443.1" width="1.2" height="1" fill="#8a8a8a"/><rect x="726.6" y="447.3" width="1.2" height="1" fill="#8a8a8a"/><rect x="726.6" y="451.5" width="1.2" height="1" fill="#8a8a8a"/><rect x="726.6" y="455.7" width="1.2" height="1" fill="#8a8a8a"/><rect x="726.6" y="459.9" width="1.2" height="1" fill="#8a8a8a"/><rect x="726.6" y="464.1" width="1.2" height="1" fill="#8a8a8a"/><rect x="726.6" y="468.3" width="1.2" height="1" fill="#8a8a8a"/><rect x="726.6" y="472.5" width="1.2" height="1" fill="#8a8a8a"/><rect x="726.6" y="476.7" width="1.2" height="1" fill="#8a8a8a"/><rect x="726.6" y="481.0" width="1.2" height="1" fill="#8a8a8a"/><rect x="726.6" y="485.2" width="1.2" height="1" fill="#8a8a8a"/><rect x="726.6" y="489.4" width="1.2" height="1" fill="#8a8a8a"/><rect x="726.6" y="493.6" width="1.2" height="1" fill="#8a8a8a"/><rect x="726.6" y="497.8" width="1.2" height="1" fill="#8a8a8a"/><rect x="726.6" y="502.0" width="1.2" height="1" fill="#8a8a8a"/><rect x="726.6" y="506.2" width="1.2" height="1" fill="#8a8a8a"/><rect x="726.6" y="510.4" width="1.2" height="1" fill="#8a8a8a"/><rect x="726.6" y="514.6" width="1.2" height="1" fill="#8a8a8a"/><rect x="726.6" y="518.8" width="1.2" height="1" fill="#8a8a8a"/><rect x="726.6" y="523.1" width="1.2" height="1" fill="#8a8a8a"/><rect x="726.6" y="527.3" width="1.2" height="1" fill="#8a8a8a"/><rect x="726.6" y="531.5" width="1.2" height="1" fill="#8a8a8a"/><g fill="#ff4040" fill-opacity="0.335"><rect x="514" y="372" width="424.5" height="20.6"/><rect x="514" y="503" width="424.5" height="30.5"/><polygon points="546,447.8 673,415.5 779.5,415.5 906,447.8 779.5,480 673,480"/></g><g clip-path="url(#pc)"><g fill="none" stroke-linecap="round" filter="url(#nz)"><path d="M404.40,410.45 L405.68,410.45 L406.97,410.45 L408.25,410.45 L409.53,410.45 L410.82,410.47 L412.10,410.57 L413.38,410.71 L414.67,410.88 L415.95,411.07 L417.23,411.28 L418.52,411.51 L419.80,411.75 L421.08,412.01 L422.37,412.28 L423.65,412.56 L424.93,412.85 L426.22,413.15 L427.50,413.46 L428.78,413.79 L430.07,414.12 L431.35,414.46 L432.63,414.80 L433.92,415.16 L435.20,415.52 L436.48,415.89 L437.77,416.27 L439.05,416.66 L440.33,417.05 L441.62,417.45 L442.90,417.86 L444.18,418.27 L445.47,418.69 L446.75,419.12 L448.03,419.55 L449.32,419.98 L450.60,420.43 L451.88,420.88 L453.17,421.33 L454.45,421.79 L455.73,422.25 L457.02,422.73 L458.30,423.20 L459.58,423.68 L460.87,424.17 L462.15,424.66 L463.43,425.15 L464.72,425.65 L466.00,426.16 L467.28,426.67 L468.57,427.18 L469.85,427.70 L471.13,428.23 L472.42,428.76 L473.70,429.29 L474.98,429.82 L476.27,430.37 L477.55,430.91 L478.83,431.46 L480.12,432.01 L481.40,432.57 L482.68,433.13 L483.97,433.70 L485.25,434.27 L486.53,434.84 L487.82,435.42 L489.10,436.00 L490.38,436.59 L491.67,437.18 L492.95,437.77 L494.23,438.37 L495.52,438.97 L496.80,439.57 L498.08,440.18 L499.37,440.79 L500.65,441.40 L501.93,442.02 L503.22,442.64 L504.50,443.27 L505.78,443.90 L507.07,444.53 L508.35,445.16 L509.63,445.80 L510.92,446.44 L512.20,447.09 L513.48,447.73 L514.77,448.37 L516.05,448.97 L517.33,449.57 L518.62,450.17 L519.90,450.76 L521.18,451.35 L522.47,451.94 L523.75,452.53 L525.03,453.11 L526.32,453.69 L527.60,454.26 L528.88,454.84 L530.17,455.41 L531.45,455.98 L532.73,456.54 L534.02,457.10 L535.30,457.66 L536.58,458.22 L537.87,458.77 L539.15,459.32 L540.43,459.87 L541.72,460.41 L543.00,460.95 L544.28,461.49 L545.57,462.02 L546.85,462.55 L548.13,463.08 L549.42,463.60 L550.70,464.12 L551.98,464.64 L553.27,465.15 L554.55,465.66 L555.83,466.17 L557.12,466.67 L558.40,467.17 L559.68,467.67 L560.97,468.16 L562.25,468.65 L563.53,469.14 L564.82,469.62 L566.10,470.10 L567.38,470.57 L568.67,471.04 L569.95,471.50 L571.23,471.97 L572.52,472.42 L573.80,472.88 L575.08,473.33 L576.37,473.77 L577.65,474.21 L578.93,474.65 L580.22,475.08 L581.50,475.51 L582.78,475.93 L584.07,476.35 L585.35,476.76 L586.63,477.17 L587.92,477.58 L589.20,477.98 L590.48,478.37 L591.77,478.76 L593.05,479.14 L594.33,479.52 L595.62,479.89 L596.90,480.26 L598.18,480.62 L599.47,480.98 L600.75,481.33 L602.03,481.67 L603.32,482.01 L604.60,482.34 L605.88,482.66 L607.17,482.98 L608.45,483.29 L609.73,483.59 L611.02,483.88 L612.30,484.17 L613.58,484.45 L614.87,484.71 L616.15,484.97 L617.43,485.22 L618.72,485.46 L620.00,485.69 L621.28,485.91 L622.57,486.11 L623.85,486.30 L625.13,486.47 L626.42,486.62 L627.70,486.74 L628.98,486.84 L630.27,486.85 L631.55,486.85 L632.83,486.85 L634.12,486.85 L635.40,486.85" stroke="#74d8a8" stroke-width="9.4" stroke-opacity="0.55"/><path d="M393.40,486.85 L394.72,486.85 L396.03,486.85 L397.35,486.85 L398.67,486.85 L399.98,486.83 L401.30,486.73 L402.62,486.59 L403.93,486.43 L405.25,486.25 L406.57,486.06 L407.88,485.85 L409.20,485.62 L410.52,485.38 L411.83,485.13 L413.15,484.87 L414.47,484.60 L415.78,484.32 L417.10,484.04 L418.42,483.74 L419.73,483.43 L421.05,483.12 L422.37,482.80 L423.68,482.47 L425.00,482.13 L426.32,481.79 L427.63,481.44 L428.95,481.08 L430.27,480.72 L431.58,480.35 L432.90,479.98 L434.22,479.59 L435.53,479.21 L436.85,478.81 L438.17,478.42 L439.48,478.01 L440.80,477.60 L442.12,477.19 L443.43,476.77 L444.75,476.35 L446.07,475.92 L447.38,475.48 L448.70,475.04 L450.02,474.60 L451.33,474.15 L452.65,473.70 L453.97,473.24 L455.28,472.78 L456.60,472.31 L457.92,471.84 L459.23,471.37 L460.55,470.89 L461.87,470.40 L463.18,469.92 L464.50,469.42 L465.82,468.93 L467.13,468.43 L468.45,467.93 L469.77,467.42 L471.08,466.91 L472.40,466.39 L473.72,465.88 L475.03,465.35 L476.35,464.83 L477.67,464.30 L478.98,463.77 L480.30,463.23 L481.62,462.69 L482.93,462.15 L484.25,461.60 L485.57,461.05 L486.88,460.49 L488.20,459.94 L489.52,459.38 L490.83,458.81 L492.15,458.25 L493.47,457.68 L494.78,457.10 L496.10,456.53 L497.42,455.95 L498.73,455.36 L500.05,454.78 L501.37,454.19 L502.68,453.60 L504.00,453.00 L505.32,452.41 L506.63,451.80 L507.95,451.20 L509.27,450.59 L510.58,449.98 L511.90,449.37 L513.22,448.76 L514.53,448.14 L515.85,447.51 L517.17,446.88 L518.48,446.25 L519.80,445.63 L521.12,445.01 L522.43,444.40 L523.75,443.79 L525.07,443.18 L526.38,442.57 L527.70,441.97 L529.02,441.37 L530.33,440.77 L531.65,440.18 L532.97,439.59 L534.28,439.01 L535.60,438.42 L536.92,437.84 L538.23,437.27 L539.55,436.70 L540.87,436.13 L542.18,435.56 L543.50,435.00 L544.82,434.44 L546.13,433.89 L547.45,433.34 L548.77,432.79 L550.08,432.25 L551.40,431.71 L552.72,431.18 L554.03,430.65 L555.35,430.12 L556.67,429.60 L557.98,429.08 L559.30,428.56 L560.62,428.05 L561.93,427.55 L563.25,427.04 L564.57,426.54 L565.88,426.05 L567.20,425.56 L568.52,425.08 L569.83,424.60 L571.15,424.12 L572.47,423.65 L573.78,423.18 L575.10,422.72 L576.42,422.27 L577.73,421.82 L579.05,421.37 L580.37,420.93 L581.68,420.49 L583.00,420.06 L584.32,419.64 L585.63,419.22 L586.95,418.80 L588.27,418.39 L589.58,417.99 L590.90,417.60 L592.22,417.21 L593.53,416.82 L594.85,416.44 L596.17,416.07 L597.48,415.71 L598.80,415.35 L600.12,415.00 L601.43,414.66 L602.75,414.33 L604.07,414.00 L605.38,413.68 L606.70,413.38 L608.02,413.08 L609.33,412.78 L610.65,412.50 L611.97,412.23 L613.28,411.98 L614.60,411.73 L615.92,411.49 L617.23,411.27 L618.55,411.07 L619.87,410.88 L621.18,410.72 L622.50,410.58 L623.82,410.47 L625.13,410.45 L626.45,410.45 L627.77,410.45 L629.08,410.45 L630.40,410.45" stroke="#74d8a8" stroke-width="9.4" stroke-opacity="0.55"/><path d="M838.60,410.45 L839.93,410.45 L841.27,410.45 L842.60,410.45 L843.93,410.45 L845.27,410.49 L846.60,410.62 L847.93,410.80 L849.27,411.00 L850.60,411.24 L851.93,411.49 L853.27,411.77 L854.60,412.06 L855.93,412.37 L857.27,412.69 L858.60,413.03 L859.93,413.38 L861.27,413.74 L862.60,414.11 L863.93,414.50 L865.27,414.89 L866.60,415.30 L867.93,415.72 L869.27,416.14 L870.60,416.58 L871.93,417.02 L873.27,417.47 L874.60,417.94 L875.93,418.41 L877.27,418.88 L878.60,419.37 L879.93,419.86 L881.27,420.37 L882.60,420.87 L883.93,421.39 L885.27,421.91 L886.60,422.44 L887.93,422.98 L889.27,423.52 L890.60,424.07 L891.93,424.63 L893.27,425.19 L894.60,425.76 L895.93,426.33 L897.27,426.91 L898.60,427.50 L899.93,428.09 L901.27,428.69 L902.60,429.29 L903.93,429.90 L905.27,430.52 L906.60,431.14 L907.93,431.76 L909.27,432.39 L910.60,433.03 L911.93,433.67 L913.27,434.31 L914.60,434.97 L915.93,435.62 L917.27,436.28 L918.60,436.95 L919.93,437.62 L921.27,438.30 L922.60,438.98 L923.93,439.66 L925.27,440.35 L926.60,441.05 L927.93,441.74 L929.27,442.45 L930.60,443.15 L931.93,443.87 L933.27,444.58 L934.60,445.30 L935.93,446.03 L937.27,446.76 L938.60,447.49 L939.93,448.23 L941.27,448.87 L942.60,449.41 L943.93,449.95 L945.27,450.48 L946.60,451.01 L947.93,451.54 L949.27,452.07 L950.60,452.59 L951.93,453.12 L953.27,453.64 L954.60,454.16 L955.93,454.67 L957.27,455.19 L958.60,455.70 L959.93,456.21 L961.27,456.71 L962.60,457.22 L963.93,457.72 L965.27,458.22 L966.60,458.71 L967.93,459.21 L969.27,459.70 L970.60,460.19 L971.93,460.68 L973.27,461.16 L974.60,461.64 L975.93,462.12 L977.27,462.60 L978.60,463.07 L979.93,463.54 L981.27,464.01 L982.60,464.47 L983.93,464.94 L985.27,465.40 L986.60,465.85 L987.93,466.31 L989.27,466.76 L990.60,467.21 L991.93,467.65 L993.27,468.10 L994.60,468.54 L995.93,468.97 L997.27,469.41 L998.60,469.84 L999.93,470.27 L1001.27,470.69 L1002.60,471.11 L1003.93,471.53 L1005.27,471.94 L1006.60,472.36 L1007.93,472.76 L1009.27,473.17 L1010.60,473.57 L1011.93,473.97 L1013.27,474.36 L1014.60,474.75 L1015.93,475.14 L1017.27,475.53 L1018.60,475.91 L1019.93,476.28 L1021.27,476.66 L1022.60,477.02 L1023.93,477.39 L1025.27,477.75 L1026.60,478.11 L1027.93,478.46 L1029.27,478.81 L1030.60,479.15 L1031.93,479.49 L1033.27,479.83 L1034.60,480.16 L1035.93,480.48 L1037.27,480.81 L1038.60,481.12 L1039.93,481.44 L1041.27,481.74 L1042.60,482.04 L1043.93,482.34 L1045.27,482.63 L1046.60,482.92 L1047.93,483.20 L1049.27,483.47 L1050.60,483.74 L1051.93,484.00 L1053.27,484.25 L1054.60,484.50 L1055.93,484.74 L1057.27,484.97 L1058.60,485.20 L1059.93,485.41 L1061.27,485.62 L1062.60,485.82 L1063.93,486.01 L1065.27,486.18 L1066.60,486.35 L1067.93,486.49 L1069.27,486.63 L1070.60,486.74 L1071.93,486.83 L1073.27,486.85 L1074.60,486.85 L1075.93,486.85 L1077.27,486.85 L1078.60,486.85" stroke="#74d8a8" stroke-width="9.4" stroke-opacity="0.55"/><path d="M836.60,486.85 L837.84,486.85 L839.08,486.85 L840.32,486.85 L841.56,486.85 L842.79,486.84 L844.03,486.75 L845.27,486.60 L846.51,486.43 L847.75,486.23 L848.99,486.01 L850.23,485.78 L851.47,485.53 L852.71,485.26 L853.94,484.98 L855.18,484.69 L856.42,484.39 L857.66,484.07 L858.90,483.75 L860.14,483.41 L861.38,483.07 L862.62,482.71 L863.86,482.35 L865.09,481.98 L866.33,481.60 L867.57,481.21 L868.81,480.81 L870.05,480.41 L871.29,480.00 L872.53,479.58 L873.77,479.16 L875.01,478.73 L876.24,478.29 L877.48,477.84 L878.72,477.39 L879.96,476.93 L881.20,476.47 L882.44,476.00 L883.68,475.53 L884.92,475.05 L886.16,474.56 L887.39,474.07 L888.63,473.57 L889.87,473.07 L891.11,472.56 L892.35,472.04 L893.59,471.53 L894.83,471.00 L896.07,470.47 L897.31,469.94 L898.54,469.40 L899.78,468.86 L901.02,468.31 L902.26,467.76 L903.50,467.20 L904.74,466.64 L905.98,466.07 L907.22,465.50 L908.46,464.92 L909.69,464.35 L910.93,463.76 L912.17,463.17 L913.41,462.58 L914.65,461.98 L915.89,461.38 L917.13,460.78 L918.37,460.17 L919.61,459.56 L920.84,458.94 L922.08,458.32 L923.32,457.70 L924.56,457.07 L925.80,456.44 L927.04,455.80 L928.28,455.16 L929.52,454.52 L930.76,453.87 L931.99,453.22 L933.23,452.56 L934.47,451.91 L935.71,451.24 L936.95,450.58 L938.19,449.91 L939.43,449.24 L940.67,448.57 L941.91,447.98 L943.14,447.40 L944.38,446.82 L945.62,446.25 L946.86,445.67 L948.10,445.10 L949.34,444.53 L950.58,443.97 L951.82,443.41 L953.06,442.85 L954.29,442.29 L955.53,441.73 L956.77,441.18 L958.01,440.63 L959.25,440.09 L960.49,439.54 L961.73,439.00 L962.97,438.46 L964.21,437.93 L965.44,437.40 L966.68,436.87 L967.92,436.34 L969.16,435.82 L970.40,435.30 L971.64,434.79 L972.88,434.27 L974.12,433.76 L975.36,433.25 L976.59,432.75 L977.83,432.25 L979.07,431.75 L980.31,431.26 L981.55,430.77 L982.79,430.28 L984.03,429.80 L985.27,429.32 L986.51,428.84 L987.74,428.36 L988.98,427.89 L990.22,427.43 L991.46,426.97 L992.70,426.51 L993.94,426.05 L995.18,425.60 L996.42,425.15 L997.66,424.71 L998.89,424.27 L1000.13,423.83 L1001.37,423.40 L1002.61,422.97 L1003.85,422.55 L1005.09,422.13 L1006.33,421.71 L1007.57,421.30 L1008.81,420.89 L1010.04,420.49 L1011.28,420.09 L1012.52,419.70 L1013.76,419.31 L1015.00,418.93 L1016.24,418.55 L1017.48,418.18 L1018.72,417.81 L1019.96,417.45 L1021.19,417.09 L1022.43,416.74 L1023.67,416.39 L1024.91,416.05 L1026.15,415.71 L1027.39,415.38 L1028.63,415.06 L1029.87,414.74 L1031.11,414.43 L1032.34,414.13 L1033.58,413.83 L1034.82,413.54 L1036.06,413.26 L1037.30,412.99 L1038.54,412.72 L1039.78,412.46 L1041.02,412.22 L1042.26,411.98 L1043.49,411.75 L1044.73,411.53 L1045.97,411.33 L1047.21,411.13 L1048.45,410.96 L1049.69,410.79 L1050.93,410.65 L1052.17,410.53 L1053.41,410.46 L1054.64,410.45 L1055.88,410.45 L1057.12,410.45 L1058.36,410.45 L1059.60,410.45" stroke="#74d8a8" stroke-width="9.4" stroke-opacity="0.55"/><path d="M372 410.45 L1080 410.45" stroke="#74d8a8" stroke-width="9.4" stroke-opacity="0.55"/><path d="M372 486.85 L1080 486.85" stroke="#74d8a8" stroke-width="9.2" stroke-opacity="0.55"/></g><g fill="none" stroke-linecap="round" filter="url(#nz2)"><path d="M404.40,410.45 L405.68,410.45 L406.97,410.45 L408.25,410.45 L409.53,410.45 L410.82,410.47 L412.10,410.57 L413.38,410.71 L414.67,410.88 L415.95,411.07 L417.23,411.28 L418.52,411.51 L419.80,411.75 L421.08,412.01 L422.37,412.28 L423.65,412.56 L424.93,412.85 L426.22,413.15 L427.50,413.46 L428.78,413.79 L430.07,414.12 L431.35,414.46 L432.63,414.80 L433.92,415.16 L435.20,415.52 L436.48,415.89 L437.77,416.27 L439.05,416.66 L440.33,417.05 L441.62,417.45 L442.90,417.86 L444.18,418.27 L445.47,418.69 L446.75,419.12 L448.03,419.55 L449.32,419.98 L450.60,420.43 L451.88,420.88 L453.17,421.33 L454.45,421.79 L455.73,422.25 L457.02,422.73 L458.30,423.20 L459.58,423.68 L460.87,424.17 L462.15,424.66 L463.43,425.15 L464.72,425.65 L466.00,426.16 L467.28,426.67 L468.57,427.18 L469.85,427.70 L471.13,428.23 L472.42,428.76 L473.70,429.29 L474.98,429.82 L476.27,430.37 L477.55,430.91 L478.83,431.46 L480.12,432.01 L481.40,432.57 L482.68,433.13 L483.97,433.70 L485.25,434.27 L486.53,434.84 L487.82,435.42 L489.10,436.00 L490.38,436.59 L491.67,437.18 L492.95,437.77 L494.23,438.37 L495.52,438.97 L496.80,439.57 L498.08,440.18 L499.37,440.79 L500.65,441.40 L501.93,442.02 L503.22,442.64 L504.50,443.27 L505.78,443.90 L507.07,444.53 L508.35,445.16 L509.63,445.80 L510.92,446.44 L512.20,447.09 L513.48,447.73 L514.77,448.37 L516.05,448.97 L517.33,449.57 L518.62,450.17 L519.90,450.76 L521.18,451.35 L522.47,451.94 L523.75,452.53 L525.03,453.11 L526.32,453.69 L527.60,454.26 L528.88,454.84 L530.17,455.41 L531.45,455.98 L532.73,456.54 L534.02,457.10 L535.30,457.66 L536.58,458.22 L537.87,458.77 L539.15,459.32 L540.43,459.87 L541.72,460.41 L543.00,460.95 L544.28,461.49 L545.57,462.02 L546.85,462.55 L548.13,463.08 L549.42,463.60 L550.70,464.12 L551.98,464.64 L553.27,465.15 L554.55,465.66 L555.83,466.17 L557.12,466.67 L558.40,467.17 L559.68,467.67 L560.97,468.16 L562.25,468.65 L563.53,469.14 L564.82,469.62 L566.10,470.10 L567.38,470.57 L568.67,471.04 L569.95,471.50 L571.23,471.97 L572.52,472.42 L573.80,472.88 L575.08,473.33 L576.37,473.77 L577.65,474.21 L578.93,474.65 L580.22,475.08 L581.50,475.51 L582.78,475.93 L584.07,476.35 L585.35,476.76 L586.63,477.17 L587.92,477.58 L589.20,477.98 L590.48,478.37 L591.77,478.76 L593.05,479.14 L594.33,479.52 L595.62,479.89 L596.90,480.26 L598.18,480.62 L599.47,480.98 L600.75,481.33 L602.03,481.67 L603.32,482.01 L604.60,482.34 L605.88,482.66 L607.17,482.98 L608.45,483.29 L609.73,483.59 L611.02,483.88 L612.30,484.17 L613.58,484.45 L614.87,484.71 L616.15,484.97 L617.43,485.22 L618.72,485.46 L620.00,485.69 L621.28,485.91 L622.57,486.11 L623.85,486.30 L625.13,486.47 L626.42,486.62 L627.70,486.74 L628.98,486.84 L630.27,486.85 L631.55,486.85 L632.83,486.85 L634.12,486.85 L635.40,486.85" stroke="#ff3b3b" stroke-width="7.4"/><path d="M393.40,486.85 L394.72,486.85 L396.03,486.85 L397.35,486.85 L398.67,486.85 L399.98,486.83 L401.30,486.73 L402.62,486.59 L403.93,486.43 L405.25,486.25 L406.57,486.06 L407.88,485.85 L409.20,485.62 L410.52,485.38 L411.83,485.13 L413.15,484.87 L414.47,484.60 L415.78,484.32 L417.10,484.04 L418.42,483.74 L419.73,483.43 L421.05,483.12 L422.37,482.80 L423.68,482.47 L425.00,482.13 L426.32,481.79 L427.63,481.44 L428.95,481.08 L430.27,480.72 L431.58,480.35 L432.90,479.98 L434.22,479.59 L435.53,479.21 L436.85,478.81 L438.17,478.42 L439.48,478.01 L440.80,477.60 L442.12,477.19 L443.43,476.77 L444.75,476.35 L446.07,475.92 L447.38,475.48 L448.70,475.04 L450.02,474.60 L451.33,474.15 L452.65,473.70 L453.97,473.24 L455.28,472.78 L456.60,472.31 L457.92,471.84 L459.23,471.37 L460.55,470.89 L461.87,470.40 L463.18,469.92 L464.50,469.42 L465.82,468.93 L467.13,468.43 L468.45,467.93 L469.77,467.42 L471.08,466.91 L472.40,466.39 L473.72,465.88 L475.03,465.35 L476.35,464.83 L477.67,464.30 L478.98,463.77 L480.30,463.23 L481.62,462.69 L482.93,462.15 L484.25,461.60 L485.57,461.05 L486.88,460.49 L488.20,459.94 L489.52,459.38 L490.83,458.81 L492.15,458.25 L493.47,457.68 L494.78,457.10 L496.10,456.53 L497.42,455.95 L498.73,455.36 L500.05,454.78 L501.37,454.19 L502.68,453.60 L504.00,453.00 L505.32,452.41 L506.63,451.80 L507.95,451.20 L509.27,450.59 L510.58,449.98 L511.90,449.37 L513.22,448.76 L514.53,448.14 L515.85,447.51 L517.17,446.88 L518.48,446.25 L519.80,445.63 L521.12,445.01 L522.43,444.40 L523.75,443.79 L525.07,443.18 L526.38,442.57 L527.70,441.97 L529.02,441.37 L530.33,440.77 L531.65,440.18 L532.97,439.59 L534.28,439.01 L535.60,438.42 L536.92,437.84 L538.23,437.27 L539.55,436.70 L540.87,436.13 L542.18,435.56 L543.50,435.00 L544.82,434.44 L546.13,433.89 L547.45,433.34 L548.77,432.79 L550.08,432.25 L551.40,431.71 L552.72,431.18 L554.03,430.65 L555.35,430.12 L556.67,429.60 L557.98,429.08 L559.30,428.56 L560.62,428.05 L561.93,427.55 L563.25,427.04 L564.57,426.54 L565.88,426.05 L567.20,425.56 L568.52,425.08 L569.83,424.60 L571.15,424.12 L572.47,423.65 L573.78,423.18 L575.10,422.72 L576.42,422.27 L577.73,421.82 L579.05,421.37 L580.37,420.93 L581.68,420.49 L583.00,420.06 L584.32,419.64 L585.63,419.22 L586.95,418.80 L588.27,418.39 L589.58,417.99 L590.90,417.60 L592.22,417.21 L593.53,416.82 L594.85,416.44 L596.17,416.07 L597.48,415.71 L598.80,415.35 L600.12,415.00 L601.43,414.66 L602.75,414.33 L604.07,414.00 L605.38,413.68 L606.70,413.38 L608.02,413.08 L609.33,412.78 L610.65,412.50 L611.97,412.23 L613.28,411.98 L614.60,411.73 L615.92,411.49 L617.23,411.27 L618.55,411.07 L619.87,410.88 L621.18,410.72 L622.50,410.58 L623.82,410.47 L625.13,410.45 L626.45,410.45 L627.77,410.45 L629.08,410.45 L630.40,410.45" stroke="#ff3b3b" stroke-width="7.4"/><path d="M838.60,410.45 L839.93,410.45 L841.27,410.45 L842.60,410.45 L843.93,410.45 L845.27,410.49 L846.60,410.62 L847.93,410.80 L849.27,411.00 L850.60,411.24 L851.93,411.49 L853.27,411.77 L854.60,412.06 L855.93,412.37 L857.27,412.69 L858.60,413.03 L859.93,413.38 L861.27,413.74 L862.60,414.11 L863.93,414.50 L865.27,414.89 L866.60,415.30 L867.93,415.72 L869.27,416.14 L870.60,416.58 L871.93,417.02 L873.27,417.47 L874.60,417.94 L875.93,418.41 L877.27,418.88 L878.60,419.37 L879.93,419.86 L881.27,420.37 L882.60,420.87 L883.93,421.39 L885.27,421.91 L886.60,422.44 L887.93,422.98 L889.27,423.52 L890.60,424.07 L891.93,424.63 L893.27,425.19 L894.60,425.76 L895.93,426.33 L897.27,426.91 L898.60,427.50 L899.93,428.09 L901.27,428.69 L902.60,429.29 L903.93,429.90 L905.27,430.52 L906.60,431.14 L907.93,431.76 L909.27,432.39 L910.60,433.03 L911.93,433.67 L913.27,434.31 L914.60,434.97 L915.93,435.62 L917.27,436.28 L918.60,436.95 L919.93,437.62 L921.27,438.30 L922.60,438.98 L923.93,439.66 L925.27,440.35 L926.60,441.05 L927.93,441.74 L929.27,442.45 L930.60,443.15 L931.93,443.87 L933.27,444.58 L934.60,445.30 L935.93,446.03 L937.27,446.76 L938.60,447.49 L939.93,448.23 L941.27,448.87 L942.60,449.41 L943.93,449.95 L945.27,450.48 L946.60,451.01 L947.93,451.54 L949.27,452.07 L950.60,452.59 L951.93,453.12 L953.27,453.64 L954.60,454.16 L955.93,454.67 L957.27,455.19 L958.60,455.70 L959.93,456.21 L961.27,456.71 L962.60,457.22 L963.93,457.72 L965.27,458.22 L966.60,458.71 L967.93,459.21 L969.27,459.70 L970.60,460.19 L971.93,460.68 L973.27,461.16 L974.60,461.64 L975.93,462.12 L977.27,462.60 L978.60,463.07 L979.93,463.54 L981.27,464.01 L982.60,464.47 L983.93,464.94 L985.27,465.40 L986.60,465.85 L987.93,466.31 L989.27,466.76 L990.60,467.21 L991.93,467.65 L993.27,468.10 L994.60,468.54 L995.93,468.97 L997.27,469.41 L998.60,469.84 L999.93,470.27 L1001.27,470.69 L1002.60,471.11 L1003.93,471.53 L1005.27,471.94 L1006.60,472.36 L1007.93,472.76 L1009.27,473.17 L1010.60,473.57 L1011.93,473.97 L1013.27,474.36 L1014.60,474.75 L1015.93,475.14 L1017.27,475.53 L1018.60,475.91 L1019.93,476.28 L1021.27,476.66 L1022.60,477.02 L1023.93,477.39 L1025.27,477.75 L1026.60,478.11 L1027.93,478.46 L1029.27,478.81 L1030.60,479.15 L1031.93,479.49 L1033.27,479.83 L1034.60,480.16 L1035.93,480.48 L1037.27,480.81 L1038.60,481.12 L1039.93,481.44 L1041.27,481.74 L1042.60,482.04 L1043.93,482.34 L1045.27,482.63 L1046.60,482.92 L1047.93,483.20 L1049.27,483.47 L1050.60,483.74 L1051.93,484.00 L1053.27,484.25 L1054.60,484.50 L1055.93,484.74 L1057.27,484.97 L1058.60,485.20 L1059.93,485.41 L1061.27,485.62 L1062.60,485.82 L1063.93,486.01 L1065.27,486.18 L1066.60,486.35 L1067.93,486.49 L1069.27,486.63 L1070.60,486.74 L1071.93,486.83 L1073.27,486.85 L1074.60,486.85 L1075.93,486.85 L1077.27,486.85 L1078.60,486.85" stroke="#ff3b3b" stroke-width="7.4"/><path d="M836.60,486.85 L837.84,486.85 L839.08,486.85 L840.32,486.85 L841.56,486.85 L842.79,486.84 L844.03,486.75 L845.27,486.60 L846.51,486.43 L847.75,486.23 L848.99,486.01 L850.23,485.78 L851.47,485.53 L852.71,485.26 L853.94,484.98 L855.18,484.69 L856.42,484.39 L857.66,484.07 L858.90,483.75 L860.14,483.41 L861.38,483.07 L862.62,482.71 L863.86,482.35 L865.09,481.98 L866.33,481.60 L867.57,481.21 L868.81,480.81 L870.05,480.41 L871.29,480.00 L872.53,479.58 L873.77,479.16 L875.01,478.73 L876.24,478.29 L877.48,477.84 L878.72,477.39 L879.96,476.93 L881.20,476.47 L882.44,476.00 L883.68,475.53 L884.92,475.05 L886.16,474.56 L887.39,474.07 L888.63,473.57 L889.87,473.07 L891.11,472.56 L892.35,472.04 L893.59,471.53 L894.83,471.00 L896.07,470.47 L897.31,469.94 L898.54,469.40 L899.78,468.86 L901.02,468.31 L902.26,467.76 L903.50,467.20 L904.74,466.64 L905.98,466.07 L907.22,465.50 L908.46,464.92 L909.69,464.35 L910.93,463.76 L912.17,463.17 L913.41,462.58 L914.65,461.98 L915.89,461.38 L917.13,460.78 L918.37,460.17 L919.61,459.56 L920.84,458.94 L922.08,458.32 L923.32,457.70 L924.56,457.07 L925.80,456.44 L927.04,455.80 L928.28,455.16 L929.52,454.52 L930.76,453.87 L931.99,453.22 L933.23,452.56 L934.47,451.91 L935.71,451.24 L936.95,450.58 L938.19,449.91 L939.43,449.24 L940.67,448.57 L941.91,447.98 L943.14,447.40 L944.38,446.82 L945.62,446.25 L946.86,445.67 L948.10,445.10 L949.34,444.53 L950.58,443.97 L951.82,443.41 L953.06,442.85 L954.29,442.29 L955.53,441.73 L956.77,441.18 L958.01,440.63 L959.25,440.09 L960.49,439.54 L961.73,439.00 L962.97,438.46 L964.21,437.93 L965.44,437.40 L966.68,436.87 L967.92,436.34 L969.16,435.82 L970.40,435.30 L971.64,434.79 L972.88,434.27 L974.12,433.76 L975.36,433.25 L976.59,432.75 L977.83,432.25 L979.07,431.75 L980.31,431.26 L981.55,430.77 L982.79,430.28 L984.03,429.80 L985.27,429.32 L986.51,428.84 L987.74,428.36 L988.98,427.89 L990.22,427.43 L991.46,426.97 L992.70,426.51 L993.94,426.05 L995.18,425.60 L996.42,425.15 L997.66,424.71 L998.89,424.27 L1000.13,423.83 L1001.37,423.40 L1002.61,422.97 L1003.85,422.55 L1005.09,422.13 L1006.33,421.71 L1007.57,421.30 L1008.81,420.89 L1010.04,420.49 L1011.28,420.09 L1012.52,419.70 L1013.76,419.31 L1015.00,418.93 L1016.24,418.55 L1017.48,418.18 L1018.72,417.81 L1019.96,417.45 L1021.19,417.09 L1022.43,416.74 L1023.67,416.39 L1024.91,416.05 L1026.15,415.71 L1027.39,415.38 L1028.63,415.06 L1029.87,414.74 L1031.11,414.43 L1032.34,414.13 L1033.58,413.83 L1034.82,413.54 L1036.06,413.26 L1037.30,412.99 L1038.54,412.72 L1039.78,412.46 L1041.02,412.22 L1042.26,411.98 L1043.49,411.75 L1044.73,411.53 L1045.97,411.33 L1047.21,411.13 L1048.45,410.96 L1049.69,410.79 L1050.93,410.65 L1052.17,410.53 L1053.41,410.46 L1054.64,410.45 L1055.88,410.45 L1057.12,410.45 L1058.36,410.45 L1059.60,410.45" stroke="#ff3b3b" stroke-width="7.4"/><path d="M372 410.45 L1080 410.45" stroke="#ff3b3b" stroke-width="7.4"/><path d="M372 486.85 L1080 486.85" stroke="#ff3b3b" stroke-width="7.2"/></g></g><g font-family="Liberation Sans, sans-serif" font-size="6.1" fill="#2596a0"><text x="373.3" y="381.9">600.1 mV</text><text x="373.3" y="402.9">400.1 mV</text><text x="373.3" y="424.0">200 mV</text><text x="373.3" y="445.0">0 mV</text><text x="373.3" y="466.1">-200 mV</text><text x="373.3" y="487.1">-400.1 mV</text><text x="373.3" y="508.2">-600.1 mV</text><text x="373.3" y="529.2">-800.1 mV</text><text x="435.7" y="529.4">-0.347 ns</text><text x="506.4" y="529.4">0 ns</text><text x="577.1" y="529.4">0.347 ns</text><text x="647.7" y="529.4">0.695 ns</text><text x="718.4" y="529.4">1.042 ns</text><text x="789.1" y="529.4">1.389 ns</text><text x="859.8" y="529.4">1.737 ns</text><text x="930.4" y="529.4">2.084 ns</text><text x="1001.1" y="529.4">2.431 ns</text></g><rect x="1049" y="509" width="30" height="24.5" fill="#e9e9e9"/><rect x="1079" y="353.5" width="1" height="180" fill="#9a9a9a"/><path d="M363 443.4 H370.2 L372 446.6 L370.2 449.8 H363 Z" fill="#2ec0c8"/><rect x="364.3" y="444.6" width="5.2" height="4" fill="none" stroke="#9fe6ea" stroke-width="0.7"/><polygon points="1003.5,421 1007,418.5 1007,423.5" fill="#1020d0"/></svg>
<div class="b" style="left:0px;top:557px;width:1080px;height:51px;background:#121212;"></div>
<div class="b" style="left:3px;top:557px;width:1077px;height:1px;background:#181a1a;"></div>
<div class="t" style="left:17.40px;top:556.27px;font-size:8.9px;line-height:8.9px;color:#1b2b2b;">-800.1 mV</div>
<div class="t" style="left:111.80px;top:556.27px;font-size:8.9px;line-height:8.9px;color:#1b2b2b;">-0.2 ps</div>
<div class="t" style="left:217.70px;top:556.27px;font-size:8.9px;line-height:8.9px;color:#1b2b2b;">0 ps</div>
<div class="t" style="left:323.60px;top:556.27px;font-size:8.9px;line-height:8.9px;color:#1b2b2b;">0.2 ps</div>
<div class="t" style="left:429.50px;top:556.27px;font-size:8.9px;line-height:8.9px;color:#1b2b2b;">0.4 ps</div>
<div class="t" style="left:535.40px;top:556.27px;font-size:8.9px;line-height:8.9px;color:#1b2b2b;">0.6 ps</div>
<div class="t" style="left:641.30px;top:556.27px;font-size:8.9px;line-height:8.9px;color:#1b2b2b;">0.8 ps</div>
<div class="t" style="left:747.20px;top:556.27px;font-size:8.9px;line-height:8.9px;color:#1b2b2b;">1 ps</div>
<div class="t" style="left:853.10px;top:556.27px;font-size:8.9px;line-height:8.9px;color:#1b2b2b;">1.2 ps</div>
<div class="t" style="left:959.00px;top:556.27px;font-size:8.9px;line-height:8.9px;color:#1b2b2b;">1.4 ps</div>
<div class="b" style="left:0px;top:567px;width:1080px;height:2px;background:#0f1419;"></div>
<div class="b" style="left:261px;top:581px;width:603px;height:27px;background:#161616;"></div>
<div class="b" style="left:261px;top:580px;width:603px;height:1px;background:#202020;"></div>
<div class="b" style="left:3px;top:574px;width:28px;height:7px;background:#353210;"></div>
<div class="t" style="left:-283.00px;width:600px;text-align:center;top:573.46px;font-size:9.5px;line-height:9.5px;color:#1c1a08;">C1</div>
<div class="b" style="left:3px;top:581px;width:28px;height:2px;background:#f2ea00;"></div>
<div class="t" style="left:-514.50px;width:600px;text-align:right;top:574.67px;font-size:8.9px;line-height:8.9px;color:#3a370e;">DC50</div>
<div class="b" style="left:2.5px;top:583px;width:84.5px;height:23px;background:#393939;border-radius:1.5px;"></div>
<div class="t" style="left:-514.50px;width:600px;text-align:right;top:584.67px;font-size:8.9px;line-height:8.9px;color:#e6e6e6;">200mV/</div>
<div class="t" style="left:3.80px;top:594.77px;font-size:8.9px;line-height:8.9px;color:#e6e6e6;">FULL</div>
<div class="t" style="left:-514.50px;width:600px;text-align:right;top:594.77px;font-size:8.9px;line-height:8.9px;color:#e6e6e6;">0.00V</div>
<svg class="b" style="left:5px;top:584px;" width="14" height="8" viewBox="0 0 14 8"><path d="M0.8 6.8 Q3 4.5 12.8 1" fill="none" stroke="#5a5a6a" stroke-width="0.7"/><path d="M4 5 L10 2.2" stroke="#3a8ae0" stroke-width="1.3"/></svg>
<div class="b" style="left:89px;top:573px;width:86px;height:8px;background:#111417;box-shadow:inset 0 0 0 1px #14222c;"></div>
<div class="b" style="left:90px;top:574px;width:29px;height:7px;background:#103a3c;"></div>
<div class="t" style="left:-195.50px;width:600px;text-align:center;top:573.46px;font-size:9.5px;line-height:9.5px;color:#0a1c1c;">C3</div>
<div class="t" style="left:-427.50px;width:600px;text-align:right;top:574.67px;font-size:8.9px;line-height:8.9px;color:#15423f;">DC50</div>
<div class="b" style="left:89px;top:581px;width:85.5px;height:25px;background:#2a6ec6;border-radius:1.5px;"></div>
<div class="b" style="left:90.3px;top:583px;width:83.00000000000001px;height:21.799999999999955px;background:#393939;"></div>
<div class="b" style="left:90.3px;top:581px;width:28.700000000000003px;height:2px;background:#18e0ee;"></div>
<div class="t" style="left:-427.50px;width:600px;text-align:right;top:584.67px;font-size:8.9px;line-height:8.9px;color:#e6e6e6;">200mV/</div>
<div class="t" style="left:90.80px;top:594.77px;font-size:8.9px;line-height:8.9px;color:#e6e6e6;">FULL</div>
<div class="t" style="left:-427.50px;width:600px;text-align:right;top:594.77px;font-size:8.9px;line-height:8.9px;color:#e6e6e6;">0.00V</div>
<svg class="b" style="left:92px;top:584px;" width="14" height="8" viewBox="0 0 14 8"><path d="M0.8 6.8 Q3 4.5 12.8 1" fill="none" stroke="#5a5a6a" stroke-width="0.7"/><path d="M4 5 L10 2.2" stroke="#3a8ae0" stroke-width="1.3"/></svg>
<div class="b" style="left:176px;top:580.7px;width:85.19999999999999px;height:24.59999999999991px;background:transparent;border:1px dotted #3a3a3a;box-sizing:border-box;"></div>
<div class="b" style="left:203px;top:589px;width:32px;height:1px;background:#404040;"></div>
<div class="b" style="left:219px;top:581px;width:1px;height:17px;background:#404040;"></div>
<div class="t" style="left:869.50px;top:572.97px;font-size:8.9px;line-height:8.9px;color:#282828;">Timebase</div>
<div class="t" style="left:959.00px;top:572.97px;font-size:8.9px;line-height:8.9px;color:#30300e;">Trigger</div>
<div class="t" style="left:1005.50px;top:572.97px;font-size:8.9px;line-height:8.9px;color:#30300e;">C1 DC</div>
<div class="b" style="left:863px;top:581px;width:1px;height:26px;background:#0b0b0b;"></div>
<div class="b" style="left:866px;top:583px;width:87px;height:23px;background:#404040;"></div>
<div class="t" style="left:868.00px;top:584.57px;font-size:8.9px;line-height:8.9px;color:#e6e6e6;">600ns</div>
<div class="t" style="left:352.00px;width:600px;text-align:right;top:584.57px;font-size:8.9px;line-height:8.9px;color:#e6e6e6;">200ns/div</div>
<div class="t" style="left:868.00px;top:594.57px;font-size:8.9px;line-height:8.9px;color:#e6e6e6;">80.0kpts</div>
<div class="t" style="left:351.50px;width:600px;text-align:right;top:594.57px;font-size:8.9px;line-height:8.9px;color:#e6e6e6;">50.0GSa/s</div>
<div class="b" style="left:956px;top:583px;width:77px;height:22.5px;background:#404040;"></div>
<div class="t" style="left:958.00px;top:584.57px;font-size:8.9px;line-height:8.9px;color:#e6e6e6;">Stop</div>
<div class="t" style="left:431.50px;width:600px;text-align:right;top:584.57px;font-size:8.9px;line-height:8.9px;color:#e6e6e6;">250mV</div>
<div class="t" style="left:958.00px;top:594.57px;font-size:8.9px;line-height:8.9px;color:#e6e6e6;">Pulse</div>
<div class="t" style="left:431.50px;width:600px;text-align:right;top:594.57px;font-size:8.9px;line-height:8.9px;color:#e6e6e6;">Negative</div>
<div class="b" style="left:1034.6px;top:580px;width:45.40000000000009px;height:28px;background:#1c1c1c;"></div>
<div class="t" style="left:757.50px;width:600px;text-align:center;top:585.67px;font-size:8.9px;line-height:8.9px;color:#e8e8e8;">15:14:32</div>
<div class="t" style="left:757.50px;width:600px;text-align:center;top:596.27px;font-size:8.9px;line-height:8.9px;color:#e8e8e8;">2025/9/26</div>
<svg class="b" style="left:1052px;top:579px;" width="24" height="6" viewBox="0 0 24 6"><path d="M2 4.5 Q3.5 2 5 3 Q6.5 4 8 2 Q9.5 1 11 3" fill="none" stroke="#8a8a8a" stroke-width="0.8"/><path d="M13 3 H15" stroke="#777" stroke-width="0.8"/><path d="M16 4 Q17.5 1.5 19 3 Q20.5 1.5 22 4" fill="none" stroke="#ff1010" stroke-width="1.3"/></svg>
<div class="b" style="left:0px;top:28px;width:1px;height:540px;background:#1a1a1a;"></div>
<div class="b" style="left:1px;top:299px;width:2px;height:9px;background:#1d5a5c;border-radius:1px;"></div>
<div class="b" style="left:1077px;top:51px;width:1px;height:25px;background:#172030;"></div>
<div class="b" style="left:1px;top:28px;width:1px;height:540px;background:#0d0d0d;"></div>
</div></body></html>
